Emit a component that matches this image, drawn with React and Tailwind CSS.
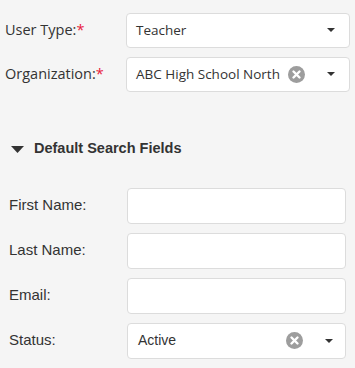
import React from "react";

const Caret = () => (
  <svg width="8" height="4" viewBox="0 0 8 4" className="block">
    <path d="M0 0 L8 0 L4 4 Z" fill="#333" />
  </svg>
);

const Clear = () => (
  <svg width="17" height="17" viewBox="0 0 17 17" className="block">
    <circle cx="8.5" cy="8.5" r="8.5" fill="#9d9d9d" />
    <path d="M5.5 5.5 L11.5 11.5 M11.5 5.5 L5.5 11.5" stroke="#fff" strokeWidth="2.4" strokeLinecap="round" />
  </svg>
);

const TopRow = ({ label, value, clear }) => (
  <div className="flex items-center h-[34px]">
    <div className="w-[126px] pl-[5px] text-[14.5px] text-[#333] font-['Open_Sans','Noto_Sans',sans-serif]">
      {label}
      <span className="text-[#e8193c]">*</span>
    </div>
    <div className="flex-1 mr-[5px] h-[35px] bg-white border border-[#dcdcdc] rounded-[4px] flex items-center pl-[9px] pr-[14px] text-[13.5px] text-[#333] font-['Open_Sans','Noto_Sans',sans-serif]">
      <span className="flex-1">{value}</span>
      {clear && <span className="mr-[22px]"><Clear /></span>}
      <Caret />
    </div>
  </div>
);

const BottomRow = ({ label, value, clear, select }) => (
  <div className="flex items-center h-[35px]">
    <div className="w-[127px] pl-[9px] text-[15px] text-[#333] font-['Liberation_Sans',Arial,sans-serif]">
      {label}
    </div>
    <div className="w-[219px] h-[36px] bg-white border border-[#dcdcdc] rounded-[4px] flex items-center pl-[10px] pr-[12px] text-[14px] text-[#333] font-['Liberation_Sans',Arial,sans-serif]">
      <span className="flex-1">{value}</span>
      {clear && <span className="mr-[22px]"><Clear /></span>}
      {select && <Caret />}
    </div>
  </div>
);

export default function App() {
  return (
    <div className="w-[355px] h-[368px] bg-[#f5f5f5] overflow-hidden">
      <div className="pt-[13px] flex flex-col gap-[10px]">
        <TopRow label="User Type:" value="Teacher" />
        <TopRow label="Organization:" value="ABC High School North" clear />
      </div>
      <div className="mt-[47px] flex items-center pl-[11px] h-[22px]">
        <svg width="13" height="7" viewBox="0 0 13 7" className="block">
          <path d="M0 0 L13 0 L6.5 7 Z" fill="#333" />
        </svg>
        <span className="ml-[10px] text-[14.5px] font-bold text-[#333] font-['Liberation_Sans',Arial,sans-serif]">
          Default Search Fields
        </span>
      </div>
      <div className="mt-[28px] flex flex-col gap-[10px]">
        <BottomRow label="First Name:" />
        <BottomRow label="Last Name:" />
        <BottomRow label="Email:" />
        <BottomRow label="Status:" value="Active" clear select />
      </div>
    </div>
  );
}
